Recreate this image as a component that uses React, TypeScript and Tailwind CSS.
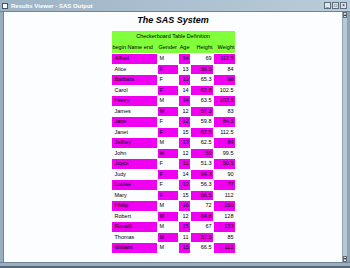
import React from "react";

type Row = [string, string, string, string, string];

const rows: Row[] = [
  ["Alfred", "M", "14", "69", "112.5"],
  ["Alice", "F", "13", "56.5", "84"],
  ["Barbara", "F", "13", "65.3", "98"],
  ["Carol", "F", "14", "62.8", "102.5"],
  ["Henry", "M", "14", "63.5", "102.5"],
  ["James", "M", "12", "57.3", "83"],
  ["Jane", "F", "12", "59.8", "84.5"],
  ["Janet", "F", "15", "62.5", "112.5"],
  ["Jeffrey", "M", "13", "62.5", "84"],
  ["John", "M", "12", "59", "99.5"],
  ["Joyce", "F", "11", "51.3", "50.5"],
  ["Judy", "F", "14", "64.3", "90"],
  ["Louise", "F", "12", "56.3", "77"],
  ["Mary", "F", "15", "66.5", "112"],
  ["Philip", "M", "16", "72", "150"],
  ["Robert", "M", "12", "64.8", "128"],
  ["Ronald", "M", "15", "67", "133"],
  ["Thomas", "M", "11", "57.5", "85"],
  ["William", "M", "15", "66.5", "112"],
];

const colW = ["w-[45px]", "w-[20px]", "w-[11px]", "w-[22px]", "w-[21px]"];
const colAlign = ["pl-[3px]", "pl-[2px]", "justify-end pr-[1px]", "justify-end pr-[1px]", "justify-end pr-[1px]"];

function WinButton({ children }: { children: React.ReactNode }) {
  return (
    <div className="w-[7px] h-[7px] bg-[#dfe6ec] border border-[#5a6e7e] flex items-center justify-center text-[5px] leading-none text-black">
      {children}
    </div>
  );
}

export default function App() {
  return (
    <div className="w-[350px] h-[268px] flex flex-col bg-[#8ea3b3] overflow-hidden" style={{ fontFamily: '"Liberation Sans", Arial, sans-serif' }}>
      {/* title bar */}
      <div className="h-[12px] flex items-center px-[2px] bg-gradient-to-r from-[#9db4c6] to-[#b9ccda] border-b border-[#6f8597]">
        <div className="w-[6px] h-[6px] bg-white border border-[#44566a] mr-[3px]" />
        <div className="text-[6px] font-bold text-white leading-none whitespace-nowrap">Results Viewer - SAS Output</div>
        <div className="ml-auto flex gap-[1px] mr-[1px]">
          <WinButton>_</WinButton>
          <WinButton>□</WinButton>
          <WinButton>×</WinButton>
        </div>
      </div>

      <div className="flex flex-1 min-h-0">
        <div className="w-[4px] bg-[#9aaebd] border-r border-[#6f8597]" />
        <div className="flex-1 bg-[#fcfdff] flex flex-col items-center pt-[4px]">
          <div className="text-[9px] font-bold italic text-black leading-none">The SAS System</div>
          <div className="mt-[6px] flex flex-col gap-[1px]">
            <div className="bg-[#80ff3a] w-[123px]">
              <div className="h-[12px] flex items-center justify-center text-[5.5px] text-black leading-none whitespace-nowrap">
                Checkerboard Table Definition
              </div>
              <div className="h-[10px] flex items-center gap-[1px] text-[5.5px] text-black leading-none whitespace-nowrap">
                <div className="w-[45px] pl-[1px]">begin Name end</div>
                <div className="w-[20px] pl-[1px]">Gender</div>
                <div className="w-[11px] text-right">Age</div>
                <div className="w-[22px] text-right">Height</div>
                <div className="w-[21px] text-right">Weight</div>
              </div>
            </div>
            {rows.map((r, i) => (
              <div key={r[0]} className="h-[9.5px] flex gap-[1px]">
                {r.map((v, j) => (
                  <div
                    key={j}
                    className={`${colW[j]} ${colAlign[j]} h-full flex items-center text-[5.5px] leading-none text-black whitespace-nowrap ${
                      (i + j) % 2 === 0 ? "bg-[#f000f0]" : "bg-[#fcfdff]"
                    }`}
                  >
                    {v}
                  </div>
                ))}
              </div>
            ))}
          </div>
        </div>
        {/* scrollbar */}
        <div className="w-[5px] bg-[#b7c9d6] flex flex-col justify-between border-l border-[#8ea3b3]">
          <div className="h-[6px] bg-[#dfe6ec] border border-[#5a6e7e] text-[4px] leading-none flex items-center justify-center">▴</div>
          <div className="h-[6px] bg-[#dfe6ec] border border-[#5a6e7e] text-[4px] leading-none flex items-center justify-center">▾</div>
        </div>
        <div className="w-[3px] bg-[#8ea3b3]" />
      </div>
      <div className="h-[6px] bg-[#9aaebd] border-t border-[#6f8597] border-b-2 border-b-[#55687a]" />
    </div>
  );
}
